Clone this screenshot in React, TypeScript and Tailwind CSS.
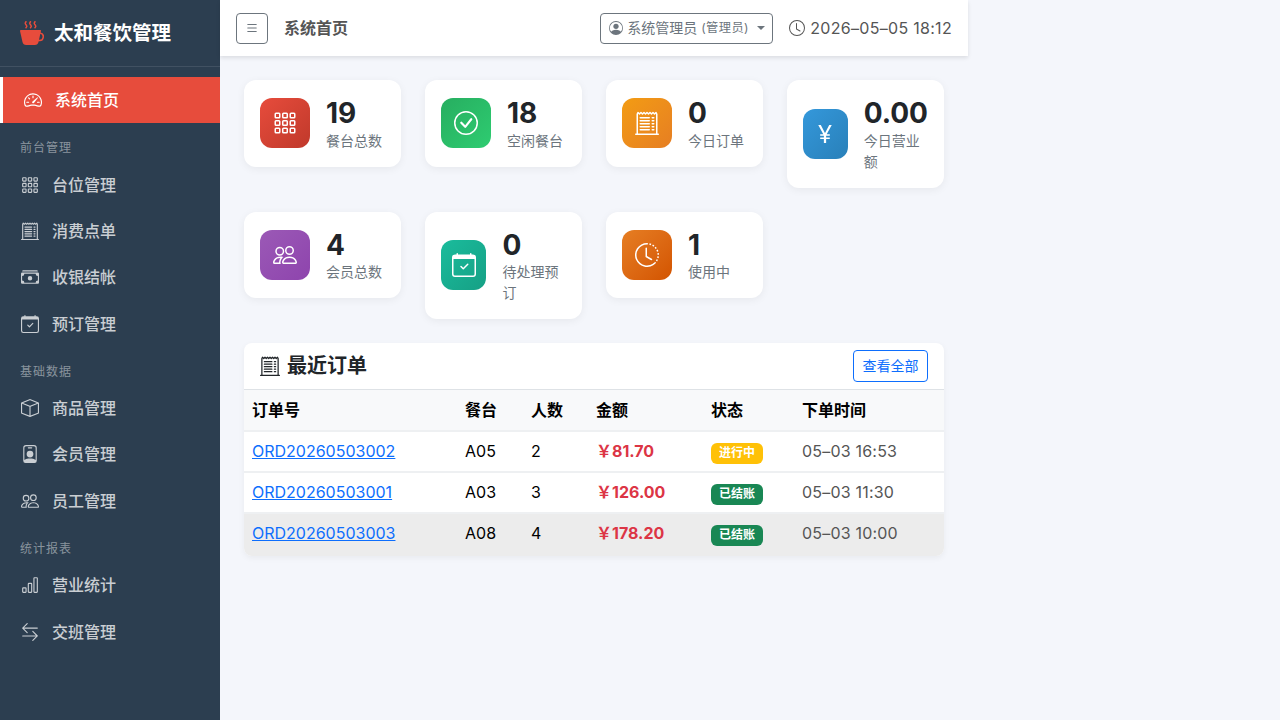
import {
  BsArrowLeftRight,
  BsBarChart,
  BsBox,
  BsCalendarCheck,
  BsCashStack,
  BsCheckCircle,
  BsClock,
  BsClockHistory,
  BsCupHotFill,
  BsCurrencyYen,
  BsGrid3X3Gap,
  BsList,
  BsPeople,
  BsPersonBadge,
  BsPersonCircle,
  BsReceiptCutoff,
  BsSpeedometer2,
} from 'react-icons/bs';
import type { ReactNode } from 'react';

const navGroups = [
  {
    label: '前台管理',
    items: [
      { icon: <BsGrid3X3Gap />, text: '台位管理' },
      { icon: <BsReceiptCutoff />, text: '消费点单' },
      { icon: <BsCashStack />, text: '收银结帐' },
      { icon: <BsCalendarCheck />, text: '预订管理' },
    ],
  },
  {
    label: '基础数据',
    items: [
      { icon: <BsBox />, text: '商品管理' },
      { icon: <BsPersonBadge />, text: '会员管理' },
      { icon: <BsPeople />, text: '员工管理' },
    ],
  },
  {
    label: '统计报表',
    items: [
      { icon: <BsBarChart />, text: '营业统计' },
      { icon: <BsArrowLeftRight />, text: '交班管理' },
    ],
  },
];

const orders = [
  { no: 'ORD20260503002', table: 'A05', people: 2, amount: '￥81.70', status: '进行中', time: '05–03 16:53', hover: false },
  { no: 'ORD20260503001', table: 'A03', people: 3, amount: '￥126.00', status: '已结账', time: '05–03 11:30', hover: false },
  { no: 'ORD20260503003', table: 'A08', people: 4, amount: '￥178.20', status: '已结账', time: '05–03 10:00', hover: true },
];

function StatCard({ icon, value, label, gradient }: { icon: ReactNode; value: string; label: string; gradient: string }) {
  return (
    <div className="flex items-center gap-4 rounded-xl bg-white p-4 shadow-[0_2px_8px_rgba(0,0,0,0.06)]">
      <div className={`flex h-[50px] w-[50px] items-center justify-center rounded-xl text-2xl text-white ${gradient}`}>
        {icon}
      </div>
      <div>
        <div className="pt-[2px] text-[28px] leading-[31.6px] font-bold text-[#212529]">{value}</div>
        <div className="text-sm leading-[21px] text-[#6c757d]">{label}</div>
      </div>
    </div>
  );
}

export default function App() {
  return (
    <div className="flex h-screen overflow-hidden bg-[#f4f6fb] font-['Inter','Noto_Sans_CJK_SC',sans-serif] text-base leading-normal text-[#212529]">
      {/* Sidebar */}
      <aside className="w-[220px] shrink-0 bg-[#2c3e50]">
        <div className="flex h-[67px] items-center gap-2.5 border-b border-white/10 px-5 text-[19.5px] font-bold text-white">
          <BsCupHotFill className="text-2xl text-[#e74c3c]" />
          <span className="pt-px">太和餐饮管理</span>
        </div>
        <nav className="pt-2.5">
          <div className="flex items-center gap-3 border-l-[3px] border-white bg-[#e74c3c] px-5 py-[11.2px] font-medium text-white">
            <span className="flex w-5 justify-center text-[18px]">
              <BsSpeedometer2 />
            </span>
            系统首页
          </div>
          {navGroups.map((group) => (
            <div key={group.label}>
              <div className="px-5 pt-4 pb-1 text-xs leading-[18px] tracking-[1px] text-white/45">{group.label}</div>
              {group.items.map((item) => (
                <div key={item.text} className="flex items-center gap-3 px-5 py-[11.2px] font-medium text-white/75">
                  <span className="flex w-5 justify-center text-[18px]">{item.icon}</span>
                  {item.text}
                </div>
              ))}
            </div>
          ))}
        </nav>
      </aside>

      {/* Main */}
      <main className="w-[748px] shrink-0">
        <header className="flex h-14 items-center justify-between bg-white px-4 shadow-[0_2px_4px_rgba(0,0,0,0.1)]">
          <div className="flex items-center gap-4">
            <button className="flex h-[31px] w-8 items-center justify-center rounded border border-[#6c757d] text-[#6c757d]">
              <BsList className="text-sm" />
            </button>
            <span className="font-bold text-[#555]">系统首页</span>
          </div>
          <div className="flex items-center gap-4">
            <button className="flex h-[31px] w-[173px] items-center rounded border border-[#6c757d] pl-2 text-sm text-[#6c757d]">
              <BsPersonCircle className="mr-1 text-sm" />
              系统管理员
              <small className="ml-1 text-[12.25px] tracking-[0.4px]">(管理员)</small>
              <span className="ml-2 h-0 w-0 border-x-[4px] border-t-[4px] border-x-transparent border-t-[#6c757d]" />
            </button>
            <span className="flex items-center gap-[5px] tracking-[0.3px] text-[#555]">
              <BsClock />
              2026–05–05 18:12
            </span>
          </div>
        </header>

        <div className="p-6">
          <div className="mb-6 grid grid-cols-4 items-start gap-6">
            <StatCard icon={<BsGrid3X3Gap />} value="19" label="餐台总数" gradient="bg-gradient-to-br from-[#e74c3c] to-[#c0392b]" />
            <StatCard icon={<BsCheckCircle />} value="18" label="空闲餐台" gradient="bg-gradient-to-br from-[#27ae60] to-[#2ecc71]" />
            <StatCard icon={<BsReceiptCutoff />} value="0" label="今日订单" gradient="bg-gradient-to-br from-[#f39c12] to-[#e67e22]" />
            <StatCard icon={<BsCurrencyYen />} value="0.00" label="今日营业额" gradient="bg-gradient-to-br from-[#3498db] to-[#2980b9]" />
            <StatCard icon={<BsPeople />} value="4" label="会员总数" gradient="bg-gradient-to-br from-[#9b59b6] to-[#8e44ad]" />
            <StatCard icon={<BsCalendarCheck />} value="0" label="待处理预订" gradient="bg-gradient-to-br from-[#1abc9c] to-[#16a085]" />
            <StatCard icon={<BsClockHistory />} value="1" label="使用中" gradient="bg-gradient-to-br from-[#e67e22] to-[#d35400]" />
          </div>

          {/* Recent orders */}
          <div className="overflow-hidden rounded-lg bg-white shadow-[0_2px_6px_rgba(0,0,0,0.05)]">
            <div className="flex h-[46px] items-center justify-between px-4">
              <div className="flex items-center gap-[7px] text-xl font-semibold">
                <BsReceiptCutoff className="text-[20px]" />
                最近订单
              </div>
              <button className="h-8 w-[75px] rounded border border-[#0d6efd] text-sm text-[#0d6efd]">查看全部</button>
            </div>
            <table className="w-full table-fixed border-collapse">
              <colgroup>
                <col className="w-[213px]" />
                <col className="w-[66px]" />
                <col className="w-[65px]" />
                <col className="w-[115px]" />
                <col className="w-[91px]" />
                <col />
              </colgroup>
              <thead>
                <tr className="h-[41px] border-t border-b-2 border-t-[#dee2e6] border-b-[#eef0f2] bg-[#f8f9fa] text-left text-black">
                  <th className="px-2 font-bold">订单号</th>
                  <th className="px-2 font-bold">餐台</th>
                  <th className="px-2 font-bold">人数</th>
                  <th className="px-2 font-bold">金额</th>
                  <th className="px-2 font-bold">状态</th>
                  <th className="px-2 font-bold">下单时间</th>
                </tr>
              </thead>
              <tbody>
                {orders.map((order) => (
                  <tr key={order.no} className={`h-[41px] border-b-2 border-[#eef0f2] last:h-[43px] last:border-b-0 ${order.hover ? 'bg-[#ececec]' : ''}`}>
                    <td className="px-2 pt-[7px] align-top">
                      <a className="text-[#0d6efd] underline">{order.no}</a>
                    </td>
                    <td className="px-2 pt-[7px] align-top text-black">{order.table}</td>
                    <td className="px-2 pt-[7px] align-top text-black">{order.people}</td>
                    <td className="px-2 pt-[7px] align-top font-bold text-[#dc3545]">{order.amount}</td>
                    <td className="px-2 pt-[7px] align-top">
                      <span className={`mt-1 flex h-[21px] w-[52px] items-center justify-center rounded-[6px] text-xs font-bold text-white ${order.status === '进行中' ? 'bg-[#ffc107]' : 'bg-[#198754]'}`}>
                        {order.status}
                      </span>
                    </td>
                    <td className="px-2 pt-[7px] align-top tracking-[0.2px] text-[#555]">{order.time}</td>
                  </tr>
                ))}
              </tbody>
            </table>
          </div>
        </div>
      </main>
    </div>
  );
}
